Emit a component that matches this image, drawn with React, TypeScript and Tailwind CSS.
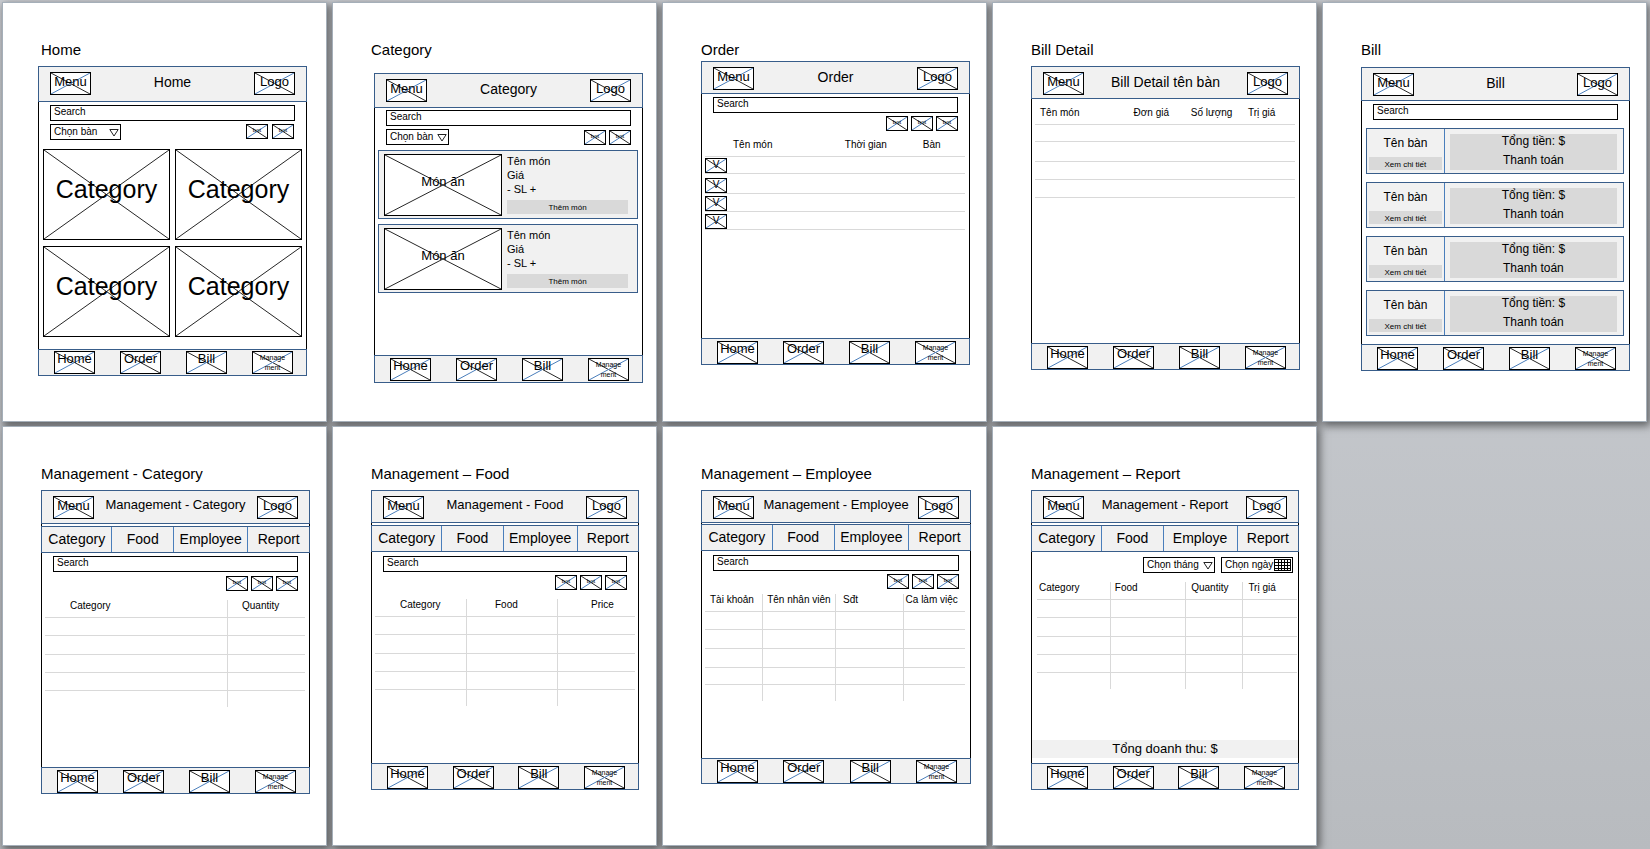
import { useId } from "react";
import type { ReactNode } from "react";

/* ---------- shared pieces ---------- */

function Cross({ plain = false }: { plain?: boolean }) {
  return (
    <svg
      className="absolute inset-0 h-full w-full"
      viewBox="0 0 100 100"
      preserveAspectRatio="none"
      aria-hidden="true"
    >
      <path d="M0 0L100 100" stroke="#262626" strokeWidth="1" vectorEffect="non-scaling-stroke" />
      <path
        d="M0 100L100 0"
        stroke={plain ? "#262626" : "#4a7ebb"}
        strokeWidth="1"
        vectorEffect="non-scaling-stroke"
      />
    </svg>
  );
}

function BoxButton({ className, children }: { className: string; children: ReactNode }) {
  return (
    <button
      type="button"
      className={`relative flex shrink-0 items-start justify-center border border-black bg-white ${className}`}
    >
      <Cross />
      <span className="relative">{children}</span>
    </button>
  );
}

function Picture({ className, children }: { className: string; children: ReactNode }) {
  return (
    <div className={`relative flex items-center justify-center border border-black bg-white ${className}`}>
      <Cross plain />
      <span className="relative">{children}</span>
    </div>
  );
}

function TopBar({ title, height, small = false }: { title: string; height: string; small?: boolean }) {
  return (
    <header
      className={`flex items-start justify-between border border-[#385d8a] bg-[#f1f1f1] px-[11px] pt-[5px] ${height}`}
    >
      <BoxButton className="h-[23px] w-[41px] text-[13px] leading-[17px]">Menu</BoxButton>
      <h2 className={`whitespace-nowrap ${small ? "text-[13px] leading-[18px]" : "text-[14px] leading-[20px]"}`}>
        {title}
      </h2>
      <BoxButton className="h-[23px] w-[41px] text-[13px] leading-[17px]">Logo</BoxButton>
    </header>
  );
}

function BottomBar({ size = "h-[27px] pt-[2px]" }: { size?: string }) {
  return (
    <nav className={`flex items-start justify-between border border-[#385d8a] bg-[#f1f1f1] pl-[15px] pr-[13px] ${size}`}>
      {["Home", "Order", "Bill"].map((name) => (
        <BoxButton key={name} className="h-[23px] w-[41px] text-[13px] leading-[13px]">
          {name}
        </BoxButton>
      ))}
      <BoxButton className="h-[23px] w-[41px] pt-px text-[7px] leading-[10px]">
        Manage
        <br />
        ment
      </BoxButton>
    </nav>
  );
}

function Tabs({ names }: { names: string[] }) {
  return (
    <nav className="grid h-[27px] grid-cols-[70fr_62fr_75fr_62fr] border border-[#385d8a] bg-[#f1f1f1]">
      {names.map((name, i) => (
        <button
          key={name}
          type="button"
          className={`pb-[2px] text-center text-[14px] leading-[18px] ${i > 0 ? "border-l border-[#4a7ebb]" : ""}`}
        >
          {name}
        </button>
      ))}
    </nav>
  );
}

function SearchBox() {
  return (
    <div className="px-[11px]">
      <input
        type="search"
        aria-label="Search"
        placeholder="Search"
        className="block h-4 w-full border border-black bg-white pb-1 pl-[3px] text-[10px] leading-[10px] placeholder:text-black placeholder:opacity-100"
      />
    </div>
  );
}

function Dropdown({ label, width }: { label: string; width: string }) {
  const id = useId();
  return (
    <div className={`relative ${width}`}>
      <label htmlFor={id} className="sr-only">
        {label}
      </label>
      <select
        id={id}
        className="block h-4 w-full appearance-none border border-black bg-white pb-px pl-[3px] text-[10px] leading-[13px]"
      >
        <option>{label}</option>
      </select>
      <svg className="pointer-events-none absolute right-[2px] top-[5px]" width="10" height="8" viewBox="0 0 10 8">
        <path d="M.8 .5H9.2L5 7Z" fill="white" stroke="#222" strokeWidth="1" />
      </svg>
    </div>
  );
}

function DateBox({ label, width }: { label: string; width: string }) {
  return (
    <div className={`relative ${width}`}>
      <input
        type="text"
        aria-label={label}
        placeholder={label}
        className="block h-4 w-full border border-black bg-white pb-px pl-[3px] text-[10px] leading-[13px] placeholder:text-black placeholder:opacity-100"
      />
      <svg
        className="pointer-events-none absolute right-[2px] top-[2px]"
        width="17"
        height="12"
        viewBox="0 0 17 12"
        shapeRendering="crispEdges"
      >
        <path
          d="M.5 .5H16.5V11.5H.5ZM4.5 .5V11.5M7.5 .5V11.5M10.5 .5V11.5M13.5 .5V11.5M.5 3.5H16.5M.5 6.5H16.5M.5 9.5H16.5"
          fill="white"
          stroke="black"
        />
      </svg>
    </div>
  );
}

function Bots({ count, gap = "gap-[3px]" }: { count: number; gap?: string }) {
  return (
    <div className={`flex ${gap}`}>
      {Array.from({ length: count }, (_, i) => (
        <BoxButton key={i} className="h-[15px] w-[22px] text-[6px] leading-[11px]">
          bot
        </BoxButton>
      ))}
    </div>
  );
}

type Column = { name: string; width: string; pad: string };

function DataTable({
  columns,
  rows,
  lined = false,
  checks = false,
}: {
  columns: Column[];
  rows: string[];
  lined?: boolean;
  checks?: boolean;
}) {
  const side = (i: number) => (lined && i > 0 ? "border-l" : "");
  return (
    <table className="w-full table-fixed border-separate border-spacing-0 text-[10px]">
      <thead>
        <tr className="h-[18px]">
          {columns.map((c, i) => (
            <th
              key={i}
              className={`whitespace-nowrap border-b border-[#d9d9d9] p-0 text-left align-top font-normal leading-[11px] ${side(i)} ${c.width} ${c.pad}`}
            >
              {c.name}
            </th>
          ))}
        </tr>
      </thead>
      <tbody>
        {rows.map((height, r) => (
          <tr key={r} className={height}>
            {columns.map((c, i) => (
              <td
                key={i}
                className={`border-[#d9d9d9] p-0 align-bottom ${lined && r === rows.length - 1 ? "" : "border-b"} ${side(i)}`}
              >
                {checks && i === 0 && (
                  <BoxButton className="h-[15px] w-[22px] text-[10px] leading-[11px]">V</BoxButton>
                )}
              </td>
            ))}
          </tr>
        ))}
      </tbody>
    </table>
  );
}

function Sheet({ title, frame, children }: { title: string; frame: string; children: ReactNode }) {
  return (
    <section className="relative min-h-[420px] border border-[#a5afb9] bg-white pt-[38px] before:absolute before:inset-0 before:-z-10 before:shadow-[2px_3px_8px_2px_rgba(0,0,0,0.5)]">
      <h1 className="pl-[38px] text-[15px] leading-[18px]">{title}</h1>
      <div className={frame}>{children}</div>
    </section>
  );
}

function Body({ className, children }: { className: string; children: ReactNode }) {
  return <main className={`flex flex-col border-x border-black bg-white ${className}`}>{children}</main>;
}

/* ---------- screens ---------- */

const plainRows = ["h-[17px]", "h-[20px]", "h-[18px]", "h-[18px]"];
const linedRows = ["h-[18px]", "h-[19px]", "h-[18px]", "h-[18px]", "h-[16px]"];

function HomeScreen() {
  return (
    <Sheet title="Home" frame="ml-[35px] mr-[19px] mt-[7px]">
      <TopBar title="Home" height="h-[36px]" />
      <Body className="min-h-[247px] pt-[3px]">
        <SearchBox />
        <div className="mt-[3px] flex items-start justify-between pl-[11px] pr-[12px]">
          <Dropdown label="Chọn bàn" width="w-[71px]" />
          <Bots count={2} gap="gap-[4px]" />
        </div>
        <div className="mt-[9px] grid grid-cols-2 gap-x-[5px] gap-y-[6px] px-[4px]">
          {[0, 1, 2, 3].map((i) => (
            <Picture key={i} className="h-[91px] pb-[9px] text-[25px]">
              Category
            </Picture>
          ))}
        </div>
      </Body>
      <BottomBar size="h-[27px] pt-px" />
    </Sheet>
  );
}

function CategoryScreen() {
  return (
    <Sheet title="Category" frame="ml-[41px] mr-[13px] mt-[14px]">
      <TopBar title="Category" height="h-[35px]" />
      <Body className="min-h-[247px] pt-[2px]">
        <SearchBox />
        <div className="mt-[3px] flex items-start justify-between px-[11px]">
          <Dropdown label="Chọn bàn" width="w-[63px]" />
          <div className="pt-px">
            <Bots count={2} />
          </div>
        </div>
        <div className="mt-[5px] flex flex-col gap-[5px] pl-[3px] pr-[4px]">
          {[0, 1].map((i) => (
            <article key={i} className="flex h-[69px] gap-[5px] border border-[#385d8a] bg-[#f1f1f1] pl-[5px] pr-[9px] pt-[3px]">
              <Picture className="h-[62px] w-[118px] shrink-0 pb-[7px] text-[13px]">Món ăn</Picture>
              <div className="min-w-0 flex-1 text-[11px] leading-[14px]">
                <p>Tên món</p>
                <p>Giá</p>
                <p>- SL +</p>
                <button type="button" className="mt-[4px] block h-[14px] w-full bg-[#d9d9d9] text-[8px] leading-[16px]">
                  Thêm món
                </button>
              </div>
            </article>
          ))}
        </div>
      </Body>
      <BottomBar size="h-[28px] pt-[2px]" />
    </Sheet>
  );
}

function OrderScreen() {
  return (
    <Sheet title="Order" frame="ml-[38px] mr-[16px] mt-[2px]">
      <TopBar title="Order" height="h-[33px]" />
      <Body className="min-h-[244px] pt-[3px]">
        <SearchBox />
        <div className="mt-[3px] flex justify-end px-[11px]">
          <Bots count={3} />
        </div>
        <div className="mt-[8px] pl-[3px] pr-[4px]">
          <DataTable
            checks
            rows={plainRows}
            columns={[
              { name: "", width: "w-[10%]", pad: "" },
              { name: "Tên món", width: "w-[43%]", pad: "pl-[2px]" },
              { name: "Thời gian", width: "w-[30%]", pad: "pl-[2px]" },
              { name: "Bàn", width: "w-[17%]", pad: "pl-[2px]" },
            ]}
          />
        </div>
      </Body>
      <BottomBar />
    </Sheet>
  );
}

function BillDetailScreen() {
  return (
    <Sheet title="Bill Detail" frame="ml-[38px] mr-[16px] mt-[7px]">
      <TopBar title="Bill Detail tên bàn" height="h-[33px]" />
      <Body className="min-h-[244px] pt-[8px]">
        <div className="pl-[3px] pr-[4px]">
          <DataTable
            rows={plainRows}
            columns={[
              { name: "Tên món", width: "w-[36%]", pad: "pl-[5px]" },
              { name: "Đơn giá", width: "w-[22%]", pad: "pl-[5px]" },
              { name: "Số lượng", width: "w-[22%]", pad: "pl-[5px]" },
              { name: "Trị giá", width: "w-[20%]", pad: "pl-[5px]" },
            ]}
          />
        </div>
      </Body>
      <BottomBar />
    </Sheet>
  );
}

function BillScreen() {
  return (
    <Sheet title="Bill" frame="ml-[38px] mr-[16px] mt-[8px]">
      <TopBar title="Bill" height="h-[34px]" />
      <Body className="min-h-[243px] pt-[3px]">
        <SearchBox />
        <div className="mt-[8px] flex flex-col gap-[8px] pl-[4px] pr-[5px]">
          {[0, 1, 2, 3].map((i) => (
            <article key={i} className="flex h-[46px] border border-[#385d8a] bg-[#f1f1f1]">
              <div className="w-[30%] px-[2px] text-center">
                <p className="text-[12px] leading-[28px]">Tên bàn</p>
                <button type="button" className="block h-[13px] w-full bg-[#d9d9d9] text-[8px] leading-[16px]">
                  Xem chi tiết
                </button>
              </div>
              <div className="flex-1 border-l border-[#4a7ebb] pl-[5px] pr-[6px] pt-[5px]">
                <button
                  type="button"
                  className="flex h-[36px] w-full flex-col items-center justify-center bg-[#d9d9d9] pb-[3px] text-[12px] leading-[19px]"
                >
                  <span>Tổng tiền: $</span>
                  <span>Thanh toán</span>
                </button>
              </div>
            </article>
          ))}
        </div>
      </Body>
      <BottomBar />
    </Sheet>
  );
}

function ManagementCategoryScreen() {
  return (
    <Sheet title="Management - Category" frame="ml-[38px] mr-[16px] mt-[7px]">
      <TopBar small title="Management - Category" height="h-[34px]" />
      <div className="h-[2px] border-x border-black" />
      <Tabs names={["Category", "Food", "Employee", "Report"]} />
      <Body className="min-h-[214px] pt-[3px]">
        <SearchBox />
        <div className="mt-[4px] flex justify-end px-[11px]">
          <Bots count={3} />
        </div>
        <div className="mt-[9px] pl-[3px] pr-[4px]">
          <DataTable
            lined
            rows={linedRows}
            columns={[
              { name: "Category", width: "w-[70%]", pad: "pl-[25px]" },
              { name: "Quantity", width: "w-[30%]", pad: "pl-[14px]" },
            ]}
          />
        </div>
      </Body>
      <BottomBar />
    </Sheet>
  );
}

function ManagementFoodScreen() {
  return (
    <Sheet title="Management – Food" frame="ml-[38px] mr-[17px] mt-[7px]">
      <TopBar small title="Management - Food" height="h-[33px]" />
      <div className="h-[2px] border-x border-black" />
      <Tabs names={["Category", "Food", "Employee", "Report"]} />
      <Body className="min-h-[211px] pt-[4px]">
        <SearchBox />
        <div className="mt-[3px] flex justify-end px-[11px]">
          <Bots count={3} />
        </div>
        <div className="mt-[9px] px-[3px]">
          <DataTable
            lined
            rows={linedRows}
            columns={[
              { name: "Category", width: "w-[35%]", pad: "pl-[25px]" },
              { name: "Food", width: "w-[35%]", pad: "pl-[28px]" },
              { name: "Price", width: "w-[30%]", pad: "pl-[33px]" },
            ]}
          />
        </div>
      </Body>
      <BottomBar />
    </Sheet>
  );
}

function ManagementEmployeeScreen() {
  return (
    <Sheet title="Management – Employee" frame="ml-[38px] mr-[15px] mt-[7px]">
      <TopBar small title="Management - Employee" height="h-[33px]" />
      <div className="h-px border-x border-black" />
      <Tabs names={["Category", "Food", "Employee", "Report"]} />
      <Body className="min-h-[207px] pt-[4px]">
        <SearchBox />
        <div className="mt-[3px] flex justify-end px-[11px]">
          <Bots count={3} />
        </div>
        <div className="mt-[5px] pl-[3px] pr-[5px]">
          <DataTable
            lined
            rows={["h-[18px]", "h-[19px]", "h-[19px]", "h-[17px]", "h-[16px]"]}
            columns={[
              { name: "Tài khoản", width: "w-[22%]", pad: "pl-[5px]" },
              { name: "Tên nhân viên", width: "w-[28%]", pad: "pl-[4px]" },
              { name: "Sđt", width: "w-[26%]", pad: "pl-[7px]" },
              { name: "Ca làm việc", width: "w-[24%]", pad: "pl-[2px]" },
            ]}
          />
        </div>
      </Body>
      <BottomBar size="h-[26px] pt-px" />
    </Sheet>
  );
}

function ManagementReportScreen() {
  return (
    <Sheet title="Management – Report" frame="ml-[38px] mr-[17px] mt-[7px]">
      <TopBar small title="Management - Report" height="h-[33px]" />
      <div className="h-[2px] border-x border-black" />
      <Tabs names={["Category", "Food", "Employe", "Report"]} />
      <Body className="min-h-[211px] pt-[5px]">
        <div className="flex justify-end gap-[6px] pr-[5px]">
          <Dropdown label="Chọn tháng" width="w-[72px]" />
          <DateBox label="Chọn ngày" width="w-[72px]" />
        </div>
        <div className="mt-[9px] pl-[5px] pr-px">
          <DataTable
            lined
            rows={linedRows}
            columns={[
              { name: "Category", width: "w-[28%]", pad: "pl-[2px]" },
              { name: "Food", width: "w-[29%]", pad: "pl-[4px]" },
              { name: "Quantity", width: "w-[22%]", pad: "pl-[5px]" },
              { name: "Trị giá", width: "w-[21%]", pad: "pl-[5px]" },
            ]}
          />
        </div>
        <p className="mb-[5px] mt-auto h-[18px] bg-[#f1f1f1] text-center text-[13px] leading-[18px]">
          Tổng doanh thu: $
        </p>
      </Body>
      <BottomBar />
    </Sheet>
  );
}

export default function App() {
  return (
    <div className="isolate min-h-screen bg-gradient-to-b from-[#cdd0d5] to-[#b8bbbf] pb-[3px] pl-[2px] pr-[3px] pt-[2px] font-['Liberation_Sans',Arial,sans-serif] text-black">
      <div className="grid grid-cols-5 gap-x-[5px] gap-y-[4px]">
        <HomeScreen />
        <CategoryScreen />
        <OrderScreen />
        <BillDetailScreen />
        <BillScreen />
        <ManagementCategoryScreen />
        <ManagementFoodScreen />
        <ManagementEmployeeScreen />
        <ManagementReportScreen />
      </div>
    </div>
  );
}
